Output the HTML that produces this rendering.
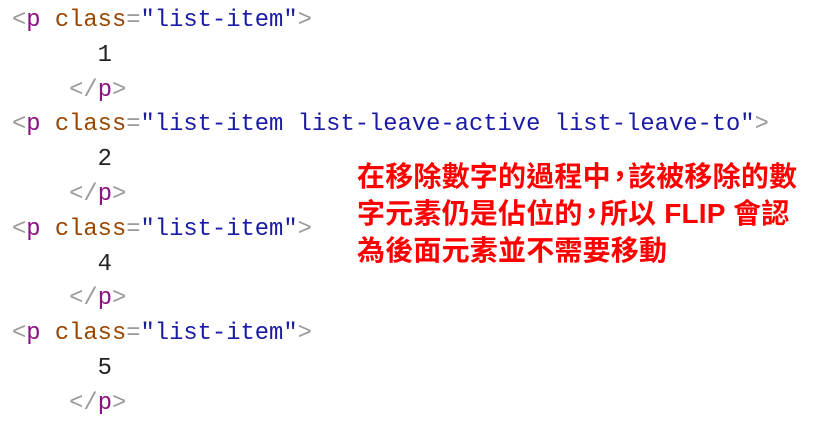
<!DOCTYPE html>
<html><head><meta charset="utf-8"><style>
body{margin:0;width:818px;height:431px;background:#fff;overflow:hidden;position:relative}
pre{margin:0;position:absolute;left:12px;top:4px;font-family:"Liberation Mono",monospace;font-size:23.8px;line-height:34.8px;color:#222}
.b{color:#999}.t{color:#881280}.a{color:#994500}.v{color:#1a1aa6}
.r{position:absolute;left:357px;top:158px;font-family:"Liberation Sans","Noto Sans CJK TC",sans-serif;font-weight:bold;font-size:28px;line-height:37px;color:#f00;letter-spacing:0.2px;white-space:nowrap}
.c{margin:0 -6px 0 -5px}
</style></head><body>
<pre><span class="b">&lt;</span><span class="t">p</span> <span class="a">class</span><span class="b">=</span><span class="v">"list-item"</span><span class="b">&gt;</span>
      1
    <span class="b">&lt;/</span><span class="t">p</span><span class="b">&gt;</span>
<span class="b">&lt;</span><span class="t">p</span> <span class="a">class</span><span class="b">=</span><span class="v">"list-item list-leave-active list-leave-to"</span><span class="b">&gt;</span>
      2
    <span class="b">&lt;/</span><span class="t">p</span><span class="b">&gt;</span>
<span class="b">&lt;</span><span class="t">p</span> <span class="a">class</span><span class="b">=</span><span class="v">"list-item"</span><span class="b">&gt;</span>
      4
    <span class="b">&lt;/</span><span class="t">p</span><span class="b">&gt;</span>
<span class="b">&lt;</span><span class="t">p</span> <span class="a">class</span><span class="b">=</span><span class="v">"list-item"</span><span class="b">&gt;</span>
      5
    <span class="b">&lt;/</span><span class="t">p</span><span class="b">&gt;</span></pre>
<div class="r">在移除數字的過程中<span class="c">，</span>該被移除的數<br>字元素仍是佔位的<span class="c">，</span>所以 FLIP 會認<br>為後面元素並不需要移動</div>
</body></html>
